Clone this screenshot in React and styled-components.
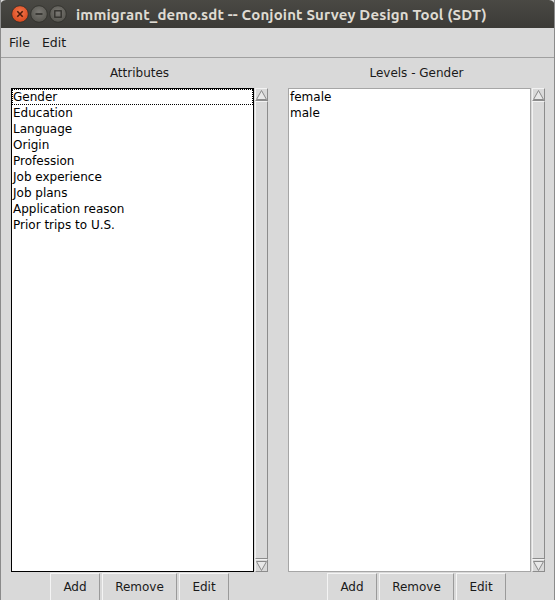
import React from 'react';
import styled, { createGlobalStyle } from 'styled-components';

const GlobalStyle = createGlobalStyle`
  html, body {
    margin: 0;
    padding: 0;
    background: #d9d9d9;
  }
  body {
    font-family: "DejaVu Sans", sans-serif;
  }
`;

const Window = styled.div`
  width: 555px;
  height: 600px;
  display: flex;
  flex-direction: column;
  background: #d9d9d9;
  overflow: hidden;
  box-sizing: border-box;
  border-left: 1px solid #8a8a8a;
  border-right: 1px solid #8a8a8a;
`;

const TitleBar = styled.div`
  height: 28px;
  flex: none;
  display: flex;
  align-items: center;
  background: linear-gradient(#4a4944, #3c3b37);
  border-radius: 6px 6px 0 0;
  margin: 0 -1px;
  padding-left: 11px;
`;

const Controls = styled.div`
  display: flex;
  align-items: center;
  gap: 1px;
  margin-right: 9px;
`;

const TitleText = styled.div`
  color: #dfdbd2;
  font-family: "Ubuntu", "DejaVu Sans", sans-serif;
  font-weight: bold;
  font-size: 15px;
  letter-spacing: 0.15px;
  white-space: nowrap;
`;

const MenuBar = styled.div`
  height: 29px;
  flex: none;
  display: flex;
  align-items: center;
  gap: 12px;
  padding-left: 8px;
  border-bottom: 1px solid #a0a0a0;
  font-family: "DejaVu Sans", sans-serif;
  font-size: 12.5px;
  color: #1a1a1a;
`;

const Body = styled.div`
  flex: 1;
  display: flex;
`;

const Column = styled.div`
  flex: 1;
  display: flex;
  flex-direction: column;
  align-items: center;
  padding-left: ${p => p.$left}px;
  padding-right: ${p => p.$right}px;
`;

const Heading = styled.div`
  height: 30px;
  line-height: 30px;
  font-size: 12px;
  color: #1a1a1a;
  align-self: center;
`;

const ListRow = styled.div`
  display: flex;
  width: 100%;
  height: 484px;
`;

const ListBox = styled.div`
  flex: 1;
  background: #fff;
  border: 1px solid ${p => (p.$focused ? '#000' : '#a6a6a6')};
  box-sizing: border-box;
  padding: 0;
  font-size: 12px;
  color: #000;
`;

const Item = styled.div`
  height: 16px;
  line-height: 16px;
  padding-left: 1px;
  box-sizing: border-box;
  white-space: nowrap;
  outline: ${p => (p.$active ? '1px dotted #000' : 'none')};
  outline-offset: -1px;
`;

const Scrollbar = styled.div`
  width: 14px;
  flex: none;
  display: flex;
  flex-direction: column;
  background: #c3c3c3;
  box-sizing: border-box;
  border-left: 1px solid #d9d9d9;
`;

const Arrow = styled.div`
  height: 13px;
  flex: none;
  display: flex;
  align-items: center;
  justify-content: center;
  background: #d9d9d9;
  border-top: 1px solid #f2f2f2;
  border-left: 1px solid #f2f2f2;
  border-bottom: 1px solid #8c8c8c;
  border-right: 1px solid #8c8c8c;
  box-sizing: border-box;
`;

const Thumb = styled.div`
  flex: 1;
  background: #d9d9d9;
  border-top: 1px solid #f2f2f2;
  border-left: 1px solid #f2f2f2;
  border-bottom: 1px solid #8c8c8c;
  border-right: 1px solid #8c8c8c;
`;

const ButtonRow = styled.div`
  display: flex;
  gap: 2px;
  margin-top: 1px;
`;

const Button = styled.button`
  height: 28px;
  width: ${p => p.$w}px;
  background: #d9d9d9;
  border-top: 1px solid #f4f4f4;
  border-left: 1px solid #f4f4f4;
  border-bottom: 1px solid #9a9a9a;
  border-right: 1px solid #9a9a9a;
  font-family: "DejaVu Sans", sans-serif;
  font-size: 12px;
  color: #1a1a1a;
  padding: 0;
`;

const Circle = ({ fill, children }) => (
  <svg width="18" height="18" viewBox="0 0 18 18">
    <defs>
      <radialGradient id={`g${fill}`} cx="50%" cy="40%" r="60%">
        <stop offset="0%" stopColor={fill === 'red' ? '#f47a50' : '#7a7873'} />
        <stop offset="100%" stopColor={fill === 'red' ? '#d8471c' : '#56554f'} />
      </radialGradient>
    </defs>
    <circle cx="9" cy="9" r="8.3" fill={`url(#g${fill})`} stroke="#2f2e2a" strokeWidth="0.8" />
    {children}
  </svg>
);

const UpArrow = () => (
  <svg width="11" height="10" viewBox="0 0 11 10">
    <polygon points="5.5,0.5 10.5,9.5 0.5,9.5" fill="#e8e8e8" stroke="#8a8a8a" strokeWidth="1" />
  </svg>
);

const DownArrow = () => (
  <svg width="11" height="10" viewBox="0 0 11 10">
    <polygon points="0.5,0.5 10.5,0.5 5.5,9.5" fill="#e8e8e8" stroke="#8a8a8a" strokeWidth="1" />
  </svg>
);

function ListPanel({ title, items, focused, left, right }) {
  return (
    <Column $left={left} $right={right}>
      <Heading>{title}</Heading>
      <ListRow>
        <ListBox $focused={focused}>
          {items.map((it, i) => (
            <Item key={it} $active={focused && i === 0}>{it}</Item>
          ))}
        </ListBox>
        <Scrollbar>
          <Arrow><UpArrow /></Arrow>
          <Thumb />
          <Arrow><DownArrow /></Arrow>
        </Scrollbar>
      </ListRow>
      <ButtonRow>
        <Button $w={50}>Add</Button>
        <Button $w={75}>Remove</Button>
        <Button $w={50}>Edit</Button>
      </ButtonRow>
    </Column>
  );
}

const attributes = [
  'Gender',
  'Education',
  'Language',
  'Origin',
  'Profession',
  'Job experience',
  'Job plans',
  'Application reason',
  'Prior trips to U.S.',
];

export default function App() {
  return (
    <Window>
      <GlobalStyle />
      <TitleBar>
        <Controls>
          <Circle fill="red">
            <path d="M6.3 6.3 L11.7 11.7 M11.7 6.3 L6.3 11.7" stroke="#4a1a0a" strokeWidth="1.6" />
          </Circle>
          <Circle fill="gray">
            <path d="M5.5 9 H12.5" stroke="#2f2e2a" strokeWidth="1.6" />
          </Circle>
          <Circle fill="gray">
            <rect x="5.8" y="5.8" width="6.4" height="6.4" fill="none" stroke="#2f2e2a" strokeWidth="1.3" />
          </Circle>
        </Controls>
        <TitleText>immigrant_demo.sdt -- Conjoint Survey Design Tool (SDT)</TitleText>
      </TitleBar>
      <MenuBar>
        <span>File</span>
        <span>Edit</span>
      </MenuBar>
      <Body>
        <ListPanel title="Attributes" items={attributes} focused left={10} right={9} />
        <ListPanel title="Levels - Gender" items={['female', 'male']} left={11} right={9} />
      </Body>
    </Window>
  );
}
